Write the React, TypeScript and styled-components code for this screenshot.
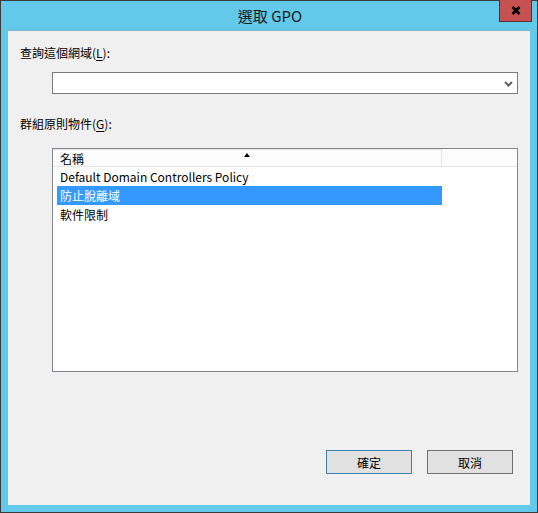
import React, { useState } from "react";
import styled, { createGlobalStyle } from "styled-components";

const GlobalStyle = createGlobalStyle`
  html, body {
    margin: 0;
    padding: 0;
    background: #63c9ea;
  }
  body {
    font-family: "Noto Sans CJK TC", "Noto Sans", sans-serif;
    font-size: 12px;
    color: #000000;
  }
`;

const items = ["Default Domain Controllers Policy", "防止脫離域", "軟件限制"];

const App = (): React.ReactElement => {
  const [selected, setSelected] = useState(1);

  return (
    <>
      <GlobalStyle />
      <Window>
        <TitleBar>
          <Title>選取 GPO</Title>
          <CloseButton aria-label="close">
            <svg width="10" height="9" viewBox="0 0 10 9">
              <path d="M1.5 1 L8.5 8 M8.5 1 L1.5 8" stroke="#000" strokeWidth="2.6" />
            </svg>
          </CloseButton>
        </TitleBar>
        <Client>
          <Label className="first">
            查詢這個網域(<u>L</u>):
          </Label>
          <Combo>
            <svg width="9" height="6" viewBox="0 0 9 6">
              <path d="M1 1 L4.5 4.5 L8 1" stroke="#606060" strokeWidth="2" fill="none" />
            </svg>
          </Combo>
          <Label className="second">
            群組原則物件(<u>G</u>):
          </Label>
          <List>
            <Header>
              <HeaderCell>
                名稱
                <SortArrow />
              </HeaderCell>
              <HeaderFill />
            </Header>
            {items.map((item, i) => (
              <Row
                key={item}
                $selected={i === selected}
                onClick={() => setSelected(i)}
              >
                {item}
              </Row>
            ))}
          </List>
          <Buttons>
            <Button $default>確定</Button>
            <Button>取消</Button>
          </Buttons>
        </Client>
      </Window>
    </>
  );
};

export default App;

const Window = styled.div`
  box-sizing: border-box;
  width: 538px;
  height: 513px;
  border: 1px solid #3a3a3a;
  background: #63c9ea;
  display: flex;
  flex-direction: column;
`;

const TitleBar = styled.div`
  position: relative;
  height: 29px;
  display: flex;
  align-items: center;
  justify-content: center;
`;

const Title = styled.div`
  font-size: 15px;
  line-height: 20px;
  color: #1a1a1a;
  margin-left: 2px;
  margin-top: 0px;
`;

const CloseButton = styled.div`
  position: absolute;
  top: -1px;
  right: 5px;
  box-sizing: border-box;
  width: 33px;
  height: 22px;
  background: #c75050;
  border: 1px solid #5c2b2b;
  border-top: none;
  display: flex;
  align-items: center;
  justify-content: center;
`;

const Client = styled.div`
  flex: 1;
  margin: 0 7px 7px 7px;
  background: #f0f0f0;
  border-top: 1px solid #7fb6cf;
  padding: 0 12px;
  display: flex;
  flex-direction: column;
`;

const Label = styled.div`
  line-height: 16px;
  height: 16px;
  &.first {
    margin-top: 14px;
  }
  &.second {
    margin-top: 22px;
  }
  u {
    text-decoration: underline;
    text-underline-offset: 2px;
  }
`;

const Combo = styled.div`
  box-sizing: border-box;
  margin: 11px 0 0 32px;
  height: 22px;
  background: #ffffff;
  border: 1px solid #7a7a7a;
  display: flex;
  align-items: center;
  justify-content: flex-end;
  padding-right: 4px;
  padding-top: 1px;
`;

const List = styled.div`
  box-sizing: border-box;
  margin: 16px 0 0 32px;
  height: 224px;
  background: #ffffff;
  border: 1px solid #828790;
  display: flex;
  flex-direction: column;
`;

const Header = styled.div`
  display: flex;
  height: 18px;
  background: #fcfcfc;
  border-bottom: 1px solid #e5e5e5;
  box-sizing: border-box;
`;

const HeaderCell = styled.div`
  position: relative;
  box-sizing: border-box;
  width: 389px;
  border-right: 1px solid #e5e5e5;
  border-top: 1px solid #e5e5e5;
  padding-left: 7px;
  line-height: 17px;
`;

const HeaderFill = styled.div`
  flex: 1;
`;

const SortArrow = styled.span`
  position: absolute;
  top: 3px;
  left: 191px;
  width: 0;
  height: 0;
  border-left: 3.5px solid transparent;
  border-right: 3.5px solid transparent;
  border-bottom: 4px solid #000000;
`;

const Row = styled.div<{ $selected?: boolean }>`
  box-sizing: border-box;
  width: 385px;
  height: 19px;
  margin-left: 4px;
  padding-left: 2px;
  line-height: 18px;
  white-space: nowrap;
  color: ${(p) => (p.$selected ? "#ffffff" : "#000000")};
  background: ${(p) => (p.$selected ? "#3399ff" : "transparent")};
  border: 1px dotted ${(p) => (p.$selected ? "#c0733a" : "transparent")};
  display: flex;
  align-items: center;
`;

const Buttons = styled.div`
  margin-top: 78px;
  padding-right: 5px;
  display: flex;
  justify-content: flex-end;
  gap: 15px;
`;

const Button = styled.button<{ $default?: boolean }>`
  box-sizing: border-box;
  width: 86px;
  height: 24px;
  background: #e1e1e1;
  border: 1px solid ${(p) => (p.$default ? "#3c7fb1" : "#707070")};
  font-family: "Noto Sans CJK TC", "Noto Sans", sans-serif;
  font-size: 12px;
  color: #000000;
  padding: 0;
  border-radius: 0;
`;
